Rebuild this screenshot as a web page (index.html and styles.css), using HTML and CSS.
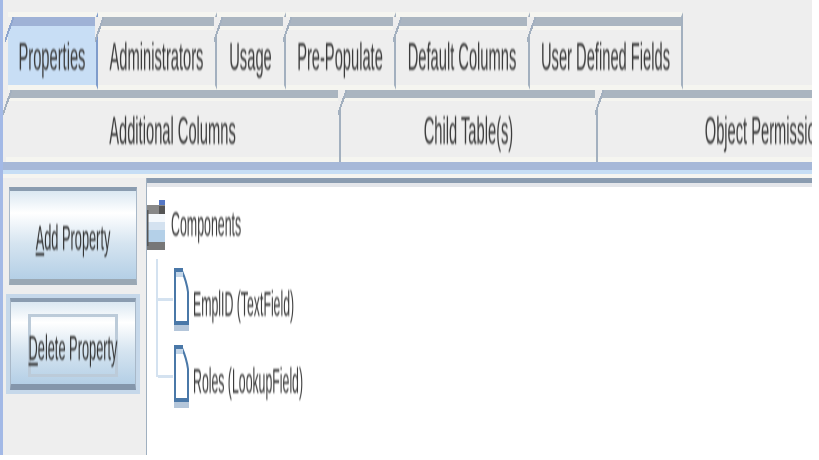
FILE: index.html
```html
<!DOCTYPE html>
<html lang="en">
<head>
  <meta charset="UTF-8">
  <title>Properties</title>
  <link rel="stylesheet" href="styles.css">
</head>
<body>
  <div class="app">
    <div class="tab-row first-row">
      <div class="tab selected w-properties"><span class="label">Properties</span></div>
      <div class="tab w-admin"><span class="label">Administrators</span></div>
      <div class="tab w-usage"><span class="label">Usage</span></div>
      <div class="tab w-prepop"><span class="label">Pre-Populate</span></div>
      <div class="tab w-default"><span class="label">Default Columns</span></div>
      <div class="tab w-user"><span class="label">User Defined Fields</span></div>
      <div class="row-filler"></div>
    </div>
    <div class="tab-row second-row">
      <div class="tab low w-additional"><span class="label">Additional Columns</span></div>
      <div class="tab low w-child"><span class="label">Child Table(s)</span></div>
      <div class="tab low w-object"><span class="label">Object Permissions</span></div>
    </div>
    <div class="strip"></div>
    <div class="content">
      <div class="sidebar">
        <button class="prop-btn"><span class="btn-label"><u>A</u>dd Property</span></button>
        <button class="prop-btn focused"><span class="focus-box"><span class="btn-label"><u>D</u>elete Property</span></span></button>
      </div>
      <div class="tree">
        <div class="tree-root">
          <svg class="folder-icon" width="18" height="50" viewBox="0 0 18 50">
            <rect x="12" y="0" width="6" height="6" fill="#5577c4"/>
            <rect x="0" y="5" width="18" height="9" fill="#888"/>
            <rect x="12" y="6" width="6" height="8" fill="#555"/>
            <rect x="0" y="14" width="18" height="8" fill="#f4f8fc"/>
            <rect x="0" y="22" width="18" height="8" fill="#d4e2f0"/>
            <rect x="0" y="30" width="18" height="12" fill="#b4d0e8"/>
            <rect x="0" y="42" width="18" height="8" fill="#777"/>
            <rect x="0" y="10" width="1.5" height="36" fill="#555"/>
          </svg>
          <span class="tree-label">Components</span>
        </div>
        <div class="tree-children">
          <div class="tree-item">
            <svg class="file-icon" width="15" height="63" viewBox="0 0 15 63">
              <path d="M1 3 H8 C11 10 13 16 14 24 V55 H1 Z" fill="#fff" stroke="#4a78a8" stroke-width="2"/>
              <rect x="0" y="0" width="9" height="4" fill="#4a78a8"/>
              <rect x="2" y="4" width="7" height="5" fill="#c4d6e8"/>
              <rect x="0" y="53" width="15" height="4" fill="#4a78a8"/>
              <rect x="0" y="57" width="15" height="6" fill="#b4c6da"/>
            </svg>
            <span class="tree-label">EmplID (TextField)</span>
          </div>
          <div class="tree-item">
            <svg class="file-icon" width="15" height="63" viewBox="0 0 15 63">
              <path d="M1 3 H8 C11 10 13 16 14 24 V55 H1 Z" fill="#fff" stroke="#4a78a8" stroke-width="2"/>
              <rect x="0" y="0" width="9" height="4" fill="#4a78a8"/>
              <rect x="2" y="4" width="7" height="5" fill="#c4d6e8"/>
              <rect x="0" y="53" width="15" height="4" fill="#4a78a8"/>
              <rect x="0" y="57" width="15" height="6" fill="#b4c6da"/>
            </svg>
            <span class="tree-label">Roles (LookupField)</span>
          </div>
        </div>
      </div>
    </div>
  </div>
</body>
</html>
```
FILE: styles.css
```css
body {
  margin: 0;
  background: #fff;
  font-family: "Liberation Sans", Arial, sans-serif;
  color: #3c3c3c;
}

.app {
  width: 809px;
  height: 455px;
  overflow: hidden;
  display: flex;
  flex-direction: column;
  background: #eeeeee;
  border-left: 3px solid #a3b9e6;
}

/* tabs */
.tab-row {
  display: flex;
  flex: none;
}
.first-row {
  height: 78px;
  margin-top: 12px;
  padding-left: 5px;
}
.second-row {
  height: 72px;
  padding-left: 3px;
}
.row-filler {
  flex: 1;
  margin-top: 73px;
  background: #f5f5f0;
}
.tab {
  position: relative;
  flex: none;
  box-sizing: border-box;
  display: flex;
  justify-content: center;
  align-items: center;
  padding-top: 12px;
  border-top: 5px solid #f5f5f0;
  border-right: 2px solid #a3b0bf;
  border-bottom: 5px solid #f5f5f0;
  background: linear-gradient(#aab5c0 0 9px, #f5f5f0 9px 13px, #eeeeee 13px);
}
.tab::before {
  content: "";
  position: absolute;
  left: -3px;
  top: 0;
  width: 9px;
  height: 25px;
  background: linear-gradient(to bottom right, #eeeeee 0 42%, #a3b0bf 42% 54%, transparent 54%);
}
.selected {
  border-right-color: #7f9ccb;
  background: linear-gradient(#9fb2d6 0 9px, #c8def5 9px);
}
.selected::before {
  background: linear-gradient(to bottom right, #eeeeee 0 42%, #8ea6cf 42% 54%, transparent 54%);
}
.low {
  padding-top: 10px;
  border-top: 0;
  border-bottom: 0;
  background: linear-gradient(#aab5c0 0 8px, #f5f5f0 8px 11px, #eeeeee 11px 67px, #f5f5f0 67px);
}
.w-properties { width: 90px; }
.w-admin { width: 119px; }
.w-usage { width: 69px; }
.w-prepop { width: 110px; }
.w-default { width: 134px; }
.w-user { width: 153px; }
.w-additional { width: 335px; }
.w-child { width: 257px; }
.w-object { width: 340px; border-right: 0; }

.label {
  display: inline-block;
  font-size: 14.7px;
  white-space: nowrap;
  transform: scaleY(2.6);
  filter: blur(0.5px);
}

.strip {
  flex: none;
  height: 16px;
  background: linear-gradient(#a6b8d8 0 8px, #c6def5 8px 12px, #f5f5f0 12px);
}

/* lower part */
.content {
  flex: 1;
  display: flex;
  min-height: 0;
}
.sidebar {
  flex: none;
  box-sizing: border-box;
  width: 144px;
  padding: 9px 9px 0 6px;
  display: flex;
  flex-direction: column;
  gap: 13px;
  border-right: 1px solid #a0b0c0;
}
.prop-btn {
  box-sizing: border-box;
  height: 98px;
  padding: 0;
  display: flex;
  justify-content: center;
  align-items: center;
  font-family: inherit;
  color: #333;
  border: 0;
  border-top: 4px solid #8a9cb0;
  border-left: 1px solid #a8b8c8;
  border-right: 1px solid #a8b8c8;
  border-bottom: 6px solid #9aa8b4;
  background: linear-gradient(#dbe8f2, #ffffff 25%, #d5e4f0 60%, #b4cfe6);
}
.prop-btn > .btn-label {
  margin-top: 4px;
}
.focused {
  height: 92px;
  margin: 0 1px;
  border-bottom-color: #8496ab;
  outline: 4px solid #c6d8ea;
}
.focus-box {
  box-sizing: border-box;
  width: 90px;
  height: 63px;
  margin-top: 4px;
  display: flex;
  justify-content: center;
  align-items: center;
  border: 3px solid #bccbd9;
}
.focus-box .btn-label {
  margin-top: 4px;
}
.btn-label {
  display: inline-block;
  font-size: 12.8px;
  white-space: nowrap;
  transform: scaleY(2.8);
  filter: blur(0.4px);
}

.tree {
  flex: 1;
  background: linear-gradient(#8a9cb0 0 5px, #e4e6ea 5px 9px, #fff 9px);
  padding-top: 22px;
}
.tree-root {
  display: flex;
  align-items: center;
  gap: 6px;
}
.tree-children {
  position: relative;
  margin: 9px 0 0 9px;
  padding-left: 16px;
  display: flex;
  flex-direction: column;
  gap: 14px;
  border-left: 2px solid #d4e2f0;
  height: 118px;
}
.tree-item {
  display: flex;
  align-items: center;
  gap: 4px;
  margin-top: 9px;
  height: 63px;
}
.tree-children .tree-item + .tree-item {
  margin-top: 0;
}
.tree-item::before {
  content: "";
  position: absolute;
  left: 0;
  width: 15px;
  height: 3px;
  background: #d4e2f0;
}
.tree-label {
  display: inline-block;
  font-size: 12.3px;
  white-space: nowrap;
  transform: scaleY(2.8);
  filter: blur(0.4px);
}
.tree-item .tree-label {
  margin-top: 10px;
}
.tree-root .tree-label {
  font-size: 12.4px;
}
.folder-icon, .file-icon {
  flex: none;
}
```
